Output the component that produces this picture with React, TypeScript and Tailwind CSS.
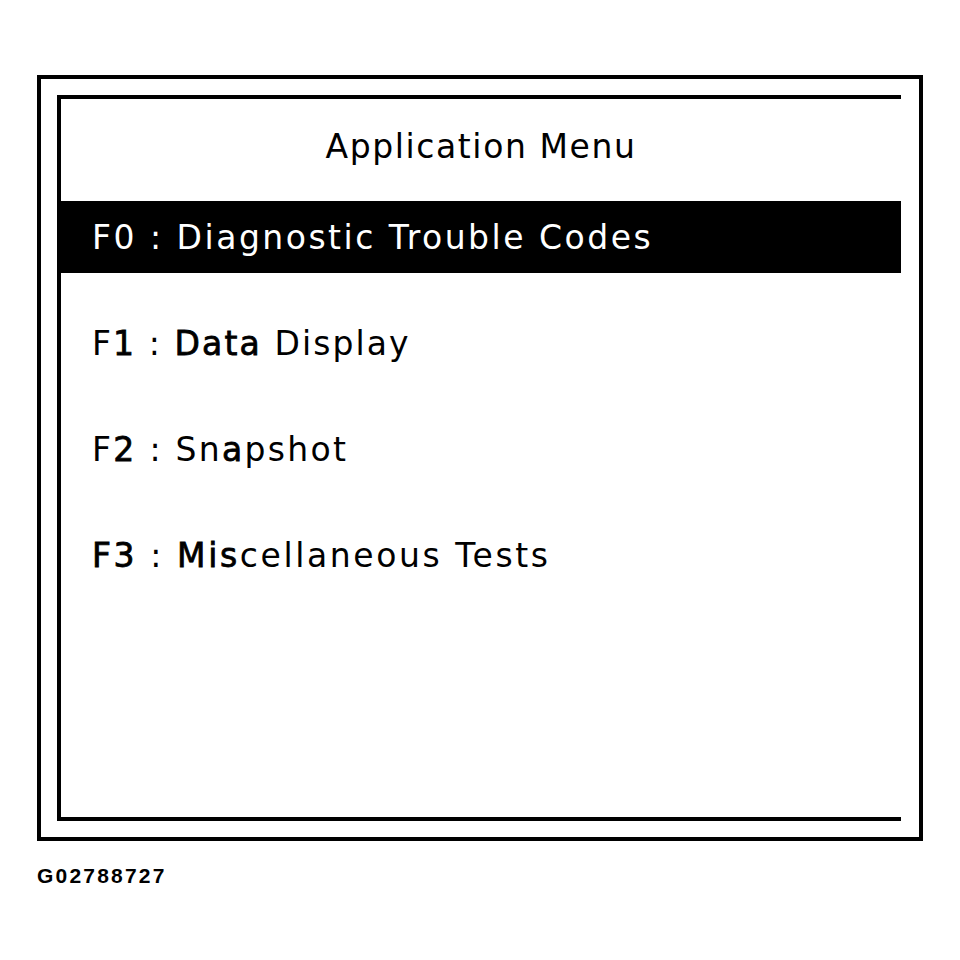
import React from "react";

const font = { fontFamily: '"Liberation Sans", Arial, sans-serif' };
const screen = { fontFamily: '"DejaVu Sans", "Liberation Sans", sans-serif' };

const B = ({ children }: { children: React.ReactNode }) => (
  <span className="[-webkit-text-stroke:0.8px_black]">{children}</span>
);

export default function App() {
  return (
    <div className="w-[960px] h-[960px] bg-white" style={font}>
      <div className="pt-[75px] pl-[37px]">
        <div className="w-[886px] h-[766px] border-4 border-black pt-[16px] pl-[16px] pb-[16px] pr-[18px]">
          <div className="w-[844px] h-[726px] border-t-4 border-b-4 border-l-4 border-black flex flex-col" style={screen}>
            <div className="h-[102px] flex items-center justify-center pb-[8px]">
              <span className="text-[33px] leading-none tracking-[1.6px] text-black">Application Menu</span>
            </div>
            <div className="flex flex-col gap-[34px]">
              <div className="h-[72px] bg-black flex items-center pl-[31px]">
                <span className="text-[33px] leading-none tracking-[2.5px] text-white">F0 : Diagnostic Trouble Codes</span>
              </div>
              <div className="h-[72px] flex items-center pl-[31px]">
                <span className="text-[33px] leading-none tracking-[2.1px] text-black">
                  F<B>1</B> : <B>Data</B> Display
                </span>
              </div>
              <div className="h-[72px] flex items-center pl-[31px]">
                <span className="text-[33px] leading-none tracking-[2.3px] text-black">
                  F<B>2</B> : Sn<B>a</B>pshot
                </span>
              </div>
              <div className="h-[72px] flex items-center pl-[31px]">
                <span className="text-[33px] leading-none tracking-[2.6px] text-black">
                  <B>F3</B> : <B>Mis</B>cellaneous Tests
                </span>
              </div>
            </div>
          </div>
        </div>
        <div className="mt-[24px] text-[21px] leading-none font-bold tracking-[2.2px] text-black">G02788727</div>
      </div>
    </div>
  );
}
